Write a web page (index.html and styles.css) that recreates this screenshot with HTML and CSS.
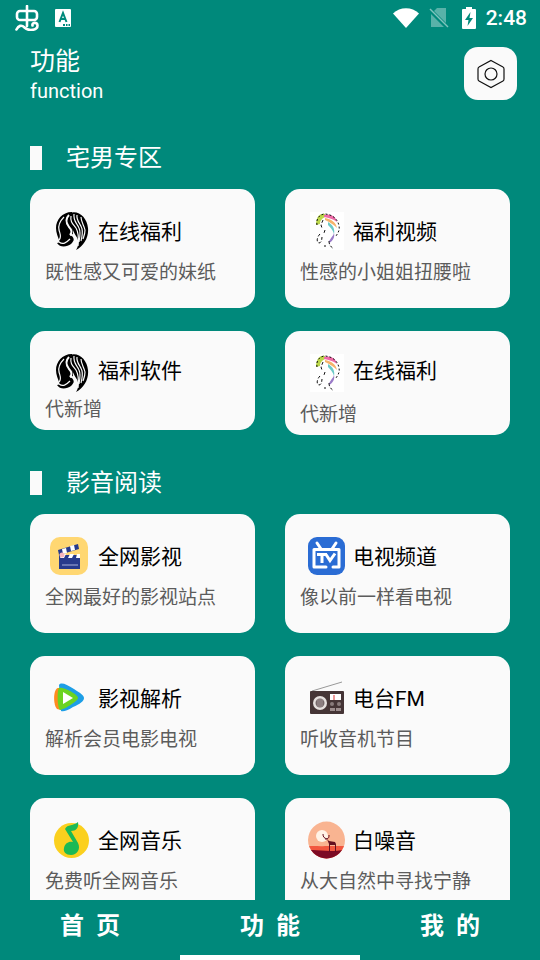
FILE: index.html
```
<!DOCTYPE html>
<html lang="zh-CN">
<head>
  <meta charset="utf-8">
  <meta name="viewport" content="width=device-width, initial-scale=1">
  <title>功能</title>
  <link rel="stylesheet" href="styles.css">
</head>
<body>
  <!-- shared icon art -->
  <svg class="defs" aria-hidden="true">
    <symbol id="hair" viewBox="0 0 42 38">
      <path d="M22 0C12 0 6 8 6 16c0 5 2 9 3 12 1 2 0 3-2 3 3 5 10 4 14 1 3-3 4-6 2-9z" fill="#000"/>
      <path d="M20 1c9-3 17 5 18 15 1 9-4 18-12 22 3-5 3-10 0-14-3-5-7-13-6-23z" fill="#000"/>
      <path d="M19 3c-4 4-3 8 0 12 3 3 3 6 1 8 2-1 4 1 5 5" fill="none" stroke="#fafafa" stroke-width="2"/>
      <path d="M21 4c-1 6 2 8 5 12 3 5 3 10 2 18M24 2c-1 7 3 9 5 14 2 4 1 9 0 14M27 3c-1 6 4 9 5 14 1 4 0 8-1 12M31 5c0 5 3 8 4 13 0 4-1 6-2 9M14 5c-4 4-6 8-5 13 1 4 3 7 0 10M9 30c4 3 7 1 11-3" fill="none" stroke="#fafafa" stroke-width="1.200"/>
    </symbol>
    <symbol id="lady" viewBox="0 0 42 38">
      <path d="M5 0h34v38H5z" fill="#fff"/>
      <path d="M20 2c-6-1-9 4-9 11l4-1c0-4 3-6 5-7z" fill="#bcd84a"/>
      <path d="M19 3c6-2 12 1 13 7-4-3-8-4-13-5z" fill="#ee69a7"/>
      <path d="M20 6c6 1 11 4 12 10-3-3-7-6-12-8z" fill="#f6b26a"/>
      <path d="M23 10c5 3 7 7 6 12-1-4-4-7-6-9z" fill="#6bcac7"/>
      <path d="M29 21c1 4-1 8-5 10 0-4 4-6 5-10z" fill="#9a7bc8"/>
      <path d="M12 13c-1-6 2-10 7-11 8 0 14 5 15 12 1 4-1 7-3 10" fill="none" stroke="#111" stroke-dasharray="2 2"/>
      <path d="M18 8l-2 5 1 3M15 22c-3 3-4 8-1 9 2 0 3-3 3-6M20 18l-1 3M24 29c0 4 2 6 5 8M19 34h2" fill="none" stroke="#111" stroke-dasharray="3 2"/>
    </symbol>
  </svg>

  <div class="app">
    <div class="status">
      <svg width="24" height="26" viewBox="0 0 24 26" fill="none" stroke="#fff" stroke-width="2.6" stroke-linecap="round">
        <path d="M12 1v20"/>
        <rect x="2" y="6" width="20" height="9" rx="3"/>
        <path d="M1.500 24.500c2-4 5-5 8-2 4 4 13 3 13-2 0-4-6-3-5 0"/>
      </svg>
      <svg class="lang" width="16" height="18" viewBox="0 0 16 18">
        <rect width="16" height="18" rx="1" fill="#fff"/>
        <path d="M4.500 13L8 4l3.500 9M6 10h4" fill="none" stroke="#00897b" stroke-width="2"/>
        <path d="M8 15h2v2H8zM11 15h1.500v2H11zM13.500 15H15v2h-1.500z" fill="#00897b"/>
      </svg>
      <div class="status-right">
        <svg width="26" height="20" viewBox="0 0 26 20"><path d="M0 5.500C7-1.500 19-1.500 26 5.500L13 20z" fill="#fff"/></svg>
        <svg width="20" height="20" viewBox="0 0 20 20">
          <path d="M8 0h9v15L5 3zM2 6l13 13H2z" fill="#fff" opacity=".35"/>
          <path d="M1 1l18 18" stroke="#fff" stroke-width="1.500" opacity=".5"/>
        </svg>
        <svg class="battery" width="14" height="22" viewBox="0 0 14 22">
          <path d="M4 0h6v2h3a1 1 0 0 1 1 1v18a1 1 0 0 1-1 1H1a1 1 0 0 1-1-1V3a1 1 0 0 1 1-1h3z" fill="#fff"/>
          <path d="M8.500 5L3 13h3.500L5.500 19 11 11H7.500z" fill="#00897b"/>
        </svg>
        <span class="time">2:48</span>
      </div>
    </div>

    <main>
      <header>
        <div>
          <h1>功能</h1>
          <p>function</p>
        </div>
        <button class="settings" type="button" aria-label="设置">
          <svg width="28" height="30" viewBox="0 0 28 30" fill="none" stroke="#111" stroke-width="1.200">
            <path d="M14 1.500l12 6.500q1 .5 1 2v10q0 1.500-1 2L14 28.500 2 22q-1-.5-1-2V10q0-1.500 1-2z"/>
            <circle cx="14" cy="15" r="6"/>
          </svg>
        </button>
      </header>

      <section>
        <h2>宅男专区</h2>
        <div class="cards">
          <a class="card" href="#">
            <div class="card-head"><svg class="icon"><use href="#hair"/></svg><h3>在线福利</h3></div>
            <p>既性感又可爱的妹纸</p>
          </a>
          <a class="card" href="#">
            <div class="card-head"><svg class="icon"><use href="#lady"/></svg><h3>福利视频</h3></div>
            <p>性感的小姐姐扭腰啦</p>
          </a>
          <a class="card small tight" href="#">
            <div class="card-head"><svg class="icon"><use href="#hair"/></svg><h3>福利软件</h3></div>
            <p>代新增</p>
          </a>
          <a class="card small" href="#">
            <div class="card-head"><svg class="icon"><use href="#lady"/></svg><h3>在线福利</h3></div>
            <p>代新增</p>
          </a>
        </div>
      </section>

      <section>
        <h2>影音阅读</h2>
        <div class="cards">
          <a class="card" href="#">
            <div class="card-head">
              <svg class="icon" viewBox="0 0 42 38">
                <rect width="38" height="38" rx="10" fill="#ffd772"/>
                <path d="M9 18h21v14H9z" fill="#273a8c"/>
                <path d="M8 13l20-6 1 5-20 6z" fill="#273a8c"/>
                <path d="M12 12l4-1 1 5-4 1zM20 9l4-1 1 5-4 1zM12 17h4l-2 4h-4zM20 17h4l-2 4h-4zM27 17h3v4h-4z" fill="#fff"/>
                <path d="M12 28h16" stroke="#a8b0dc"/>
                <circle cx="12" cy="18" r="2.500" fill="#f5b5bd"/>
              </svg>
              <h3>全网影视</h3>
            </div>
            <p>全网最好的影视站点</p>
          </a>
          <a class="card" href="#">
            <div class="card-head">
              <svg class="icon" viewBox="0 0 42 38">
                <rect x="3" width="37" height="38" rx="9" fill="#2a6cd4"/>
                <path d="M12 6l4 6M31 6l-4 6M28 30h6V12.500H9V30h12" fill="none" stroke="#fff" stroke-width="3" stroke-linecap="round" stroke-linejoin="round"/>
                <path d="M12 17.500h10M17 17.500V26M21 17.500l4 6 5-7" fill="none" stroke="#fff" stroke-width="3"/>
              </svg>
              <h3>电视频道</h3>
            </div>
            <p>像以前一样看电视</p>
          </a>
          <a class="card" href="#">
            <div class="card-head">
              <svg class="icon" viewBox="0 0 42 38">
                <path d="M8 9c-5 1-5 17-1 21l4 1V9z" fill="#ff8a1f"/>
                <path d="M9 6c2-3 7-1 15 4 6 4 10 6 10 9s-4 6-11 9c-6 4-10 5-12 4z" fill="#1d9ee6"/>
                <path d="M9 9c3-2 19 6 19 10 0 3-13 11-18 12-3-3-3-20-1-22z" fill="#6bd321"/>
                <path d="M13 13l10 6-10 6z" fill="#fff"/>
              </svg>
              <h3>影视解析</h3>
            </div>
            <p>解析会员电影电视</p>
          </a>
          <a class="card" href="#">
            <div class="card-head">
              <svg class="icon" viewBox="0 0 42 38">
                <path d="M7 12L37 3" stroke="#999"/>
                <rect x="5" y="12" width="34" height="23" rx="1" fill="#453536"/>
                <circle cx="15" cy="24" r="7" fill="#e5e0de"/>
                <circle cx="15" cy="24" r="4.500" fill="#75686a"/>
                <path d="M13 20v8M15 20v8M17 20v8" stroke="#b5aaaa" stroke-width=".7"/>
                <path d="M25 15h11v6H25z" fill="#fff"/>
                <path d="M29 16v5" stroke="#d33"/>
                <circle cx="27" cy="25" r="2" fill="#8a7c7c"/>
                <circle cx="34" cy="25" r="2" fill="#8a7c7c"/>
                <path d="M25 29h5v3h-5zM31 29h5v3h-5z" fill="#9d8e8e"/>
              </svg>
              <h3>电台FM</h3>
            </div>
            <p>听收音机节目</p>
          </a>
          <a class="card" href="#">
            <div class="card-head">
              <svg class="icon" viewBox="0 0 42 38">
                <circle cx="21.500" cy="19.500" r="17.500" fill="#fbd01e"/>
                <path d="M15 8c2-5 9-3 13-7 1 6-2 9-7 9l7 12c3 6-1 12-7 12-5 0-8-3-7-7 1-5 5-7 9-6z" fill="#1cb955"/>
              </svg>
              <h3>全网音乐</h3>
            </div>
            <p>免费听全网音乐</p>
          </a>
          <a class="card" href="#">
            <div class="card-head">
              <svg class="icon" viewBox="0 0 42 38">
                <clipPath id="round"><circle cx="21.500" cy="19" r="18.500"/></clipPath>
                <g clip-path="url(#round)">
                  <path d="M0 0h42v38H0z" fill="#f9b491"/>
                  <path d="M0 26c8-2 14 0 20-1h22v13H0z" fill="#f2573f"/>
                  <path d="M0 30c12-3 22 3 42-2v10H0z" fill="#7c0a24"/>
                  <circle cx="17" cy="15" r="6" fill="#fff3e6"/>
                  <path d="M21 17l3 3 6 1 1 2v8h-1v-7h-5v7h-1v-8l-2-5-2 1z" fill="#64101f"/>
                  <path d="M22 18c-3-1-4-2-4-5M22 18c2-1 2-2 2-4" fill="none" stroke="#64101f"/>
                </g>
              </svg>
              <h3>白噪音</h3>
            </div>
            <p>从大自然中寻找宁静</p>
          </a>
        </div>
      </section>
    </main>

    <nav>
      <a href="#">首&ensp;页</a>
      <a class="active" href="#">功&ensp;能</a>
      <a href="#">我&ensp;的</a>
    </nav>
  </div>
</body>
</html>
```
FILE: styles.css
```
* {
  box-sizing: border-box;
}
body {
  margin: 0;
  background: #00897b;
  color: #fff;
  font-family: Roboto, "Noto Sans CJK SC", sans-serif;
}
h1, h2, h3, p {
  margin: 0;
  font-weight: normal;
}
a {
  color: inherit;
  text-decoration: none;
}
.defs {
  position: absolute;
  width: 0;
  height: 0;
}
.app {
  display: flex;
  flex-direction: column;
  height: 100vh;
}

/* status bar */
.status {
  display: flex;
  align-items: center;
  height: 36px;
  padding: 0 13px 0 15px;
}
.lang {
  margin-left: 16px;
}
.status-right {
  display: flex;
  align-items: center;
  gap: 10px;
  margin-left: auto;
}
.battery {
  margin-left: 3px;
}
.time {
  font-size: 21px;
  font-weight: 500;
  line-height: 38px;
}

main {
  flex: 1;
  min-height: 0;
  overflow: hidden;
}
header {
  display: flex;
  justify-content: space-between;
  padding: 11px 23px 5px 30px;
}
header h1 {
  font-size: 25px;
  line-height: 30px;
}
header p {
  font-size: 20px;
  line-height: 28px;
}
.settings {
  display: flex;
  align-items: center;
  justify-content: center;
  width: 53px;
  height: 53px;
  padding: 0;
  border: none;
  border-radius: 14px;
  background: #fafafa;
}
section {
  padding: 36px 30px 0;
}
h2 {
  display: flex;
  align-items: center;
  gap: 24px;
  font-size: 24px;
  line-height: 24px;
}
h2::before {
  content: "";
  width: 12px;
  height: 24px;
  background: #fafafa;
}

/* cards */
.cards {
  display: grid;
  grid-template-columns: 1fr 1fr;
  align-items: start;
  gap: 23px 30px;
  margin-top: 19px;
}
.card {
  padding: 23px 15px 21px;
  border-radius: 15px;
  background: #fafafa;
}
.card-head {
  display: flex;
  align-items: center;
  gap: 6px;
  padding-left: 5px;
}
.icon {
  width: 42px;
  height: 38px;
}
.card h3 {
  padding-top: 2px;
  color: #000;
  font-size: 21px;
  line-height: 28px;
}
.card p {
  margin-top: 9px;
  color: #5c5c5c;
  font-size: 19px;
  line-height: 28px;
}
.card.small {
  padding-bottom: 6px;
}
.card.small h3 {
  padding: 0 0 4px;
}
.card.tight p {
  margin-top: 4px;
}

/* bottom tabs */
nav {
  display: grid;
  grid-template-columns: repeat(3, 1fr);
  height: 60px;
}
nav a {
  border-bottom: 5px solid transparent;
  font-size: 24px;
  font-weight: bold;
  line-height: 52px;
  text-align: center;
}
nav .active {
  border-color: #fff;
}
```
